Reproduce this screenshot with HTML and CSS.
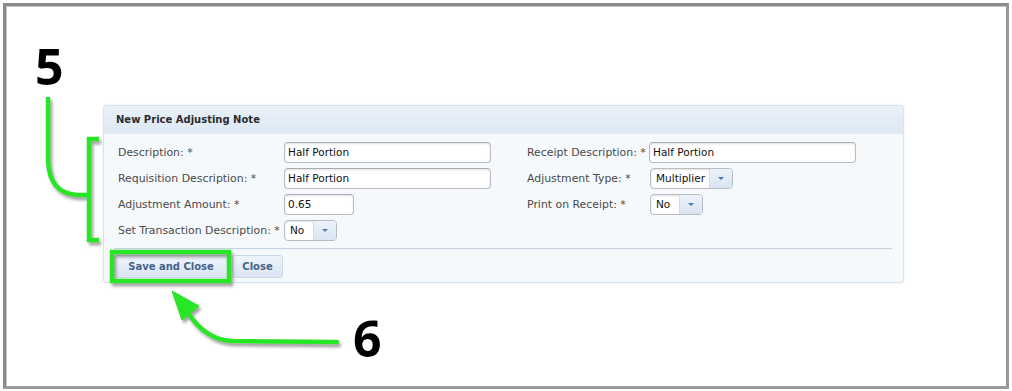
FILE: index.html
```html
<!DOCTYPE html>
<html>
<head>
<meta charset="utf-8">
<link rel="stylesheet" href="styles.css">
</head>
<body>
<div class="frame">
  <div class="panel">
    <div class="panel-header">New Price Adjusting Note</div>
    <div class="panel-body">
      <div class="form">
        <div class="col col-left">
          <div class="row"><span class="label">Description: *</span><span class="input wide">Half Portion</span></div>
          <div class="row"><span class="label">Requisition Description: *</span><span class="input wide">Half Portion</span></div>
          <div class="row"><span class="label">Adjustment Amount: *</span><span class="input short">0.65</span></div>
          <div class="row"><span class="label">Set Transaction Description: *</span><span class="combo combo-no"><span class="combo-text">No</span><span class="trigger"><span class="caret"></span></span></span></div>
        </div>
        <div class="col col-right">
          <div class="row"><span class="label">Receipt Description: *</span><span class="input wide">Half Portion</span></div>
          <div class="row"><span class="label">Adjustment Type: *</span><span class="combo combo-mult"><span class="combo-text">Multiplier</span><span class="trigger"><span class="caret"></span></span></span></div>
          <div class="row"><span class="label">Print on Receipt: *</span><span class="combo combo-no"><span class="combo-text">No</span><span class="trigger"><span class="caret"></span></span></span></div>
        </div>
      </div>
      <div class="separator"></div>
      <div class="buttons">
        <span class="btn btn-save">Save and Close</span>
        <span class="btn btn-close">Close</span>
      </div>
    </div>
  </div>
</div>
<svg class="annot" width="1012" height="391" viewBox="0 0 1012 391" xmlns="http://www.w3.org/2000/svg">
  <defs>
    <filter id="sh" x="-20%" y="-20%" width="140%" height="140%">
      <feDropShadow dx="2" dy="3" stdDeviation="1.5" flood-color="#777" flood-opacity="0.7"/>
    </filter>
  </defs>
  <g filter="url(#sh)" stroke="#27e627" fill="none" stroke-width="4.5">
    <path d="M48 97 L48 160 Q49 194 78 195 L89 195"/>
    <path d="M99 139 L89 139 L89 240 L99 240"/>
    <rect x="112" y="252" width="117" height="29"/>
    <path d="M337 342 L232 341 Q206 340 188 313" stroke-linecap="round"/>
    <path d="M172 291 L199 306 L182 320 Z" fill="#27e627" stroke-width="1"/>
  </g>
  <text x="35" y="85" class="num">5</text>
  <text x="353" y="357" class="num">6</text>
</svg>
</body>
</html>
```

FILE: styles.css
```css
html, body {
  margin: 0;
  padding: 0;
  background: #ffffff;
}
body {
  width: 1012px;
  height: 391px;
  position: relative;
  overflow: hidden;
  font-family: "DejaVu Sans", Verdana, sans-serif;
}
.frame {
  box-sizing: border-box;
  margin: 3px 0 0 3px;
  width: 1006px;
  height: 386px;
  border: 3px solid #8a8a8a;
  border-right-color: #9a9a9a;
  border-bottom-color: #9a9a9a;
  box-shadow: inset 1px 1px 0 #c4c4c4;
  padding: 99px 0 0 97px;
  background: #fff;
}
.panel {
  width: 799px;
  border: 1px solid #d9e3ee;
  border-radius: 3px;
  background: #f6f9fc;
  box-shadow: 0 0 2px rgba(180, 195, 215, 0.35);
}
.panel-header {
  height: 27px;
  line-height: 28px;
  padding-left: 12px;
  font-size: 10px;
  font-weight: bold;
  color: #2b2b2b;
  background: linear-gradient(#eaf1f9, #dde8f4);
  border-bottom: 1px solid #e4ecf5;
}
.panel-body {
  padding: 7px 10px 4px 9px;
}
.form {
  display: flex;
}
.col {
  display: flex;
  flex-direction: column;
  gap: 4px;
}
.col-left {
  width: 409px;
  padding-left: 5px;
}
.col-right {
  padding-left: 0;
}
.row {
  display: flex;
  align-items: center;
  height: 22px;
  font-size: 10.9px;
  color: #4a4a4a;
}
.col-left .label {
  width: 166px;
  flex: none;
  white-space: nowrap;
}
.col-right .label {
  width: 122px;
  flex: none;
  white-space: nowrap;
}
.input {
  box-sizing: border-box;
  height: 21px;
  line-height: 19px;
  border: 1px solid #b9bcc4;
  border-top-color: #a9acb4;
  border-radius: 4px;
  background: #fff;
  box-shadow: inset 0 1px 2px rgba(0,0,0,0.12);
  padding-left: 3px;
  font-size: 10.5px;
  color: #111;
}
.wide { width: 207px; }
.short { width: 70px; }
.combo {
  box-sizing: border-box;
  display: flex;
  height: 21px;
  border: 1px solid #b9bcc4;
  border-radius: 4px;
  background: #fff;
  box-shadow: inset 0 1px 2px rgba(0,0,0,0.12);
  overflow: hidden;
  font-size: 10.5px;
  color: #111;
}
.combo-text {
  line-height: 19px;
  padding-left: 5px;
  flex: 1;
}
.combo-no { width: 53px; }
.combo-mult { width: 83px; margin-left: 1px; }
.col-right .combo-no { margin-left: 1px; }
.trigger {
  width: 22px;
  border-left: 1px solid #d3dde9;
  background: linear-gradient(#ecf2fa, #d9e5f2);
  display: flex;
  align-items: center;
  justify-content: center;
}
.caret {
  width: 0;
  height: 0;
  border-left: 3px solid transparent;
  border-right: 3px solid transparent;
  border-top: 3px solid #4f78b0;
}
.separator {
  margin: 7px 1px 0 1px;
  height: 0;
  border-top: 1px solid #c6d2df;
  border-bottom: 1px solid #eef3f8;
}
.buttons {
  display: flex;
  gap: 4px;
  padding: 5px 0 0 1px;
}
.btn {
  box-sizing: border-box;
  height: 23px;
  line-height: 21px;
  padding: 0 7px;
  border: 1px solid #c9d7e6;
  border-radius: 3px;
  background: linear-gradient(#eef4fb, #dbe6f2);
  font-size: 10px;
  font-weight: bold;
  color: #45628a;
}
.btn-save {
  width: 114px;
  text-align: center;
}
.btn-close {
  width: 51px;
  text-align: center;
}
.annot {
  position: absolute;
  left: 0;
  top: 0;
}
.num {
  font-family: "Open Sans", "Liberation Sans", sans-serif;
  font-weight: bold;
  font-size: 50px;
  fill: #000;
}
```
